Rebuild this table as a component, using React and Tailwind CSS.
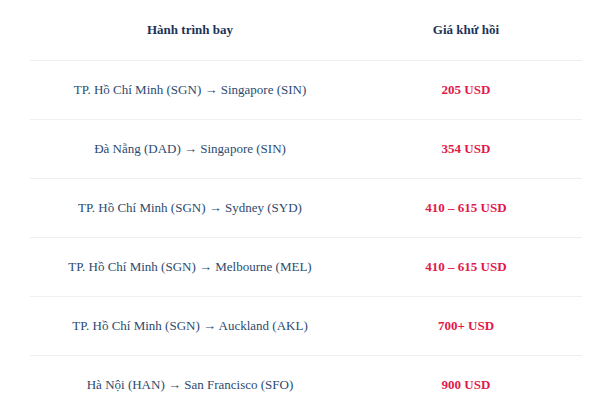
const ROUTES = [
  { route: 'TP. Hồ Chí Minh (SGN) → Singapore (SIN)', price: '205 USD' },
  { route: 'Đà Nẵng (DAD) → Singapore (SIN)', price: '354 USD' },
  { route: 'TP. Hồ Chí Minh (SGN) → Sydney (SYD)', price: '410 – 615 USD' },
  { route: 'TP. Hồ Chí Minh (SGN) → Melbourne (MEL)', price: '410 – 615 USD' },
  { route: 'TP. Hồ Chí Minh (SGN) → Auckland (AKL)', price: '700+ USD' },
  { route: 'Hà Nội (HAN) → San Francisco (SFO)', price: '900 USD' },
];

export default function App() {
  return (
    <div className="w-[600px] h-[400px] bg-white overflow-hidden [font-family:'Liberation_Serif','Times_New_Roman',serif] text-[13px]">
      <div className="ml-[30px] w-[552px]">
        <div className="flex h-[60px] items-center font-bold text-[#1c3358]">
          <div className="w-[320px] text-center">Hành trình bay</div>
          <div className="flex-1 text-center">Giá khứ hồi</div>
        </div>
        {ROUTES.map((r) => (
          <div key={r.route} className="flex h-[59px] items-center border-t border-[#efefef]">
            <div className="w-[320px] text-center text-[#2d4a6e]">{r.route}</div>
            <div className="flex-1 text-center font-bold text-[#e2184b]">{r.price}</div>
          </div>
        ))}
      </div>
    </div>
  );
}
